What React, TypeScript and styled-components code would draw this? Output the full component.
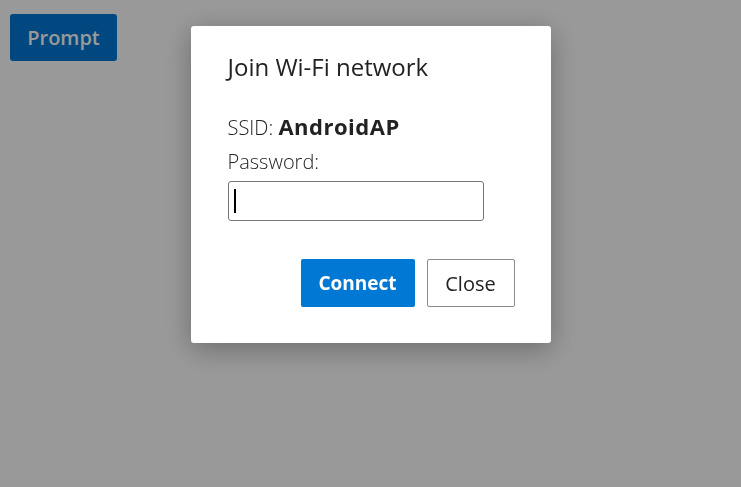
import React from "react";
import styled, { createGlobalStyle } from "styled-components";

const Global = createGlobalStyle`
  html, body { margin: 0; padding: 0; background: #fff; }
  body { font-family: "Open Sans", "Noto Sans", sans-serif; }
`;

const Page = styled.div`
  padding: 14px 10px;
  height: 487px;
  box-sizing: border-box;
`;

const PromptButton = styled.button`
  background: #0078d4;
  color: #fff;
  border: none;
  border-radius: 3px;
  width: 107px;
  height: 47px;
  font-family: "Open Sans", sans-serif;
  font-weight: 600;
  font-size: 20px;
  padding: 0;
`;

const Overlay = styled.div`
  position: fixed;
  inset: 0;
  background: rgba(0, 0, 0, 0.4);
  display: flex;
  justify-content: center;
  align-items: flex-start;
  padding-top: 26px;
`;

const Dialog = styled.div`
  width: 360px;
  box-sizing: border-box;
  background: #fff;
  border-radius: 3px;
  box-shadow: 0 6px 28px rgba(0, 0, 0, 0.3);
  padding: 24px 36px 36px 37px;
  color: #222;
`;

const Title = styled.h2`
  margin: 0 0 25px;
  font-size: 24px;
  font-weight: 400;
  line-height: 34px;
`;

const Line = styled.div`
  font-size: 20px;
  line-height: 34px;
  font-weight: 300;
  color: #222;
`;

const Strong = styled.b`
  font-weight: 700;
  font-size: 22px;
  letter-spacing: 0.5px;
`;

const Input = styled.div`
  width: 256px;
  height: 40px;
  box-sizing: border-box;
  border: 1px solid #767676;
  border-radius: 3px;
  margin-top: 2px;
  display: flex;
  align-items: center;
  padding-left: 5px;
`;

const Caret = styled.span`
  width: 2px;
  height: 24px;
  background: #000;
`;

const Actions = styled.div`
  display: flex;
  justify-content: flex-end;
  gap: 12px;
  margin-top: 38px;
`;

const Btn = styled.button<{ $primary?: boolean }>`
  height: 48px;
  padding: 0;
  width: ${(p) => (p.$primary ? "114px" : "88px")};
  border-radius: 2px;
  font-family: "Open Sans", sans-serif;
  font-size: ${(p) => (p.$primary ? "19px" : "20px")};
  font-weight: ${(p) => (p.$primary ? 700 : 400)};
  background: ${(p) => (p.$primary ? "#0078d4" : "#fff")};
  color: ${(p) => (p.$primary ? "#fff" : "#222")};
  border: ${(p) => (p.$primary ? "none" : "1px solid #8a8a8a")};
`;

export default function App() {
  return (
    <>
      <Global />
      <Page>
        <PromptButton>Prompt</PromptButton>
      </Page>
      <Overlay>
        <Dialog>
          <Title>Join Wi-Fi network</Title>
          <Line>
            SSID: <Strong>AndroidAP</Strong>
          </Line>
          <Line>Password:</Line>
          <Input>
            <Caret />
          </Input>
          <Actions>
            <Btn $primary>Connect</Btn>
            <Btn>Close</Btn>
          </Actions>
        </Dialog>
      </Overlay>
    </>
  );
}
